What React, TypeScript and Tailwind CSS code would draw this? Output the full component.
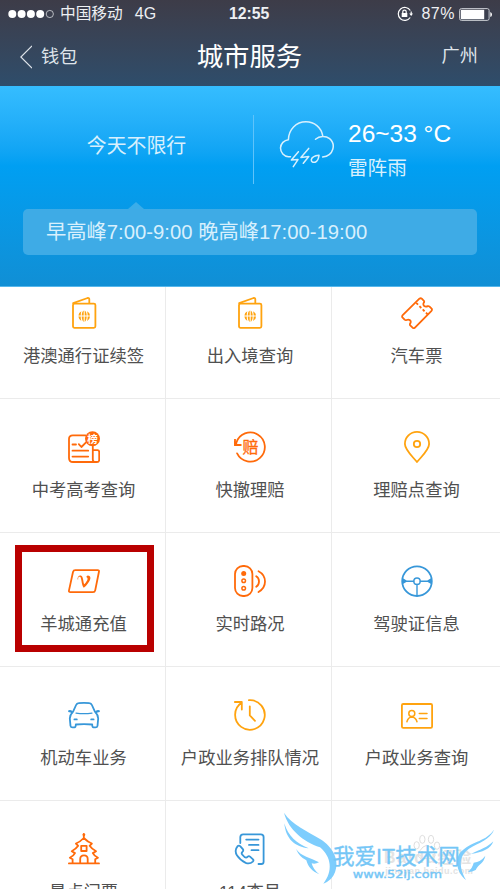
import type { ReactNode } from "react";

type Service = {
  label: string;
  color: string;
  icon: ReactNode;
  highlighted?: boolean;
};

const ORANGE = "text-[#ff6a0a]";
const YELLOW = "text-[#ffa30f]";
const BLUE = "text-[#3797d9]";

const passport = (
  <>
    <rect x="5" y="6.6" width="22.4" height="24.2" rx="1.5" />
    <path d="M5.2 6.2 19.6 1Q21.3.7 21.3 2.3V6.2" />
    <g fill="currentColor" stroke="none">
      <path d="M13.4 14.2Q10.5 15.6 10.4 18.6H12.7Q12.7 16 13.4 14.2ZM10.4 19.6H12.7Q12.7 22.3 13.4 24.1 10.5 22.6 10.4 19.6ZM19 14.2Q21.9 15.6 22 18.6H19.7Q19.7 16 19 14.2ZM22 19.6H19.7Q19.7 22.3 19 24.1 21.9 22.6 22 19.6Z" />
      <path d="M15.7 13.4Q13.9 14.5 13.7 18.6H15.7ZM16.7 13.4Q18.5 14.5 18.7 18.6H16.7ZM15.7 24.9Q13.9 23.8 13.7 19.6H15.7ZM16.7 24.9Q18.5 23.8 18.7 19.6H16.7Z" />
    </g>
  </>
);

const ticket = (
  <>
    <path d="M18.4 1.7Q19.7.8 20.8 1.7L22.9 3.8Q23.6 4.8 22.6 6 21.9 7.8 23.2 9.1 24.8 10.1 26.8 9.1 27.8 8.9 28.6 9.6L30.6 11.6Q31.4 12.7 30.5 13.8L14.2 30.4Q12.9 31.7 11.6 30.7L9.2 28.4Q8.5 27.5 9.3 26.4 10.3 24.5 9 23.2 7.5 22 5.6 23 4.5 23.5 3.6 22.7L1.4 20.4Q.7 19.3 1.7 18.2Z" />
    <path d="m15.2 5.9 12 12" strokeDasharray="2.6 2" strokeLinecap="butt" />
  </>
);

const exam = (
  <>
    <path d="M24.8 14V28.5Q24.9 31 27 31H5Q1 31 1 27V8Q1 4.3 4.8 4.3H17.5M24.8 19.2H29.5Q31.2 19.3 31.2 21V29Q31 31 29 31H26" />
    <path d="M4.5 13.5H8M10.8 13.2 13.4 16 17.8 11.6M4.5 19.7H20.2M4.5 25.6H20.2" />
    <circle cx="24.5" cy="7.7" r="7.5" fill="currentColor" stroke="none" />
    <text x="24.5" y="11.6" textAnchor="middle" fill="white" stroke="none" fontSize="10.5" fontWeight="700">
      榜
    </text>
  </>
);

const claim = (
  <>
    <path d="M2.2 12A14.6 14.6 0 1 1 3.1 22.4" />
    <path d="M1 8V14H7.5" strokeLinecap="butt" strokeLinejoin="miter" />
    <path d="M.2 9.5 4.8 14.2.2 14.8Z" fill="currentColor" stroke="none" />
    <text x="16.6" y="21.7" textAnchor="middle" fill="currentColor" stroke="currentColor" strokeWidth=".3" fontSize="16">
      赔
    </text>
  </>
);

const pin = (
  <>
    <path d="M16 31C11 25 3.9 18.8 3.9 13A12.1 12.1 0 0 1 28.1 13C28.1 18.8 21 25 16 31Z" />
    <circle cx="16" cy="13" r="3.2" />
  </>
);

const card = (
  <>
    <path d="M7.3 5.2H29.6Q31.4 5.2 30.9 7L27.2 25.4Q26.8 27.2 25 27.2H2.4Q.6 27.2 1 25.4L5 7Q5.5 5.2 7.3 5.2Z" />
    <path
      d="M9.6 14.6C8.8 10.7 13.3 8.7 14.6 12.4 15.5 15 15.4 17.6 16.2 19.3 18.5 16.8 21 13.6 18.6 12.2 18.1 11.7 18.8 10.6 20 10.4 24.9 11 21.8 17.6 15.8 22.8 13.6 20.5 13.7 14.4 12.4 12 10.6 11 9.9 12.7 10.2 14.4Z"
      fill="currentColor"
      stroke="none"
    />
  </>
);

const traffic = (
  <>
    <rect x="1" y="1" width="17.4" height="30" rx="8" />
    <circle cx="9.7" cy="8.4" r="2.5" fill="currentColor" stroke="none" />
    <circle cx="9.7" cy="15.8" r="1.8" strokeWidth="1.5" />
    <circle cx="9.7" cy="23.2" r="1.8" strokeWidth="1.5" />
    <path d="M22.2 11.3Q25 13 25 16.5T22.2 21.8M24.5 6.2Q31 9.7 31 16.5T24.5 27" />
  </>
);

const wheel = (
  <>
    <circle cx="16" cy="16.2" r="14.8" />
    <circle cx="16" cy="16.2" r="3.2" strokeWidth="1.4" />
    <path d="M3 16.2H12.8M19.2 16.2H29M16 19.4V30.5" strokeWidth="1.4" />
    <path d="M1.5 13 5.3 15.3V17L1.5 19.3ZM30.5 13 26.7 15.3V17L30.5 19.3Z" fill="currentColor" stroke="none" />
  </>
);

const car = (
  <>
    <path d="M5.2 12.4 8.1 6Q8.8 4.4 10.6 4.2 16 3.4 21.4 4.2 23.2 4.4 23.9 6L26.8 12.4Q30.2 16 30.2 19.5L29.5 26.8Q29.2 28.5 27.2 28.4H25.5Q24.2 28.3 24.2 25.5 16 24.6 7.8 25.5 7.8 28.3 6.5 28.4H4.8Q2.8 28.5 2.5 26.8L1.8 19.5Q1.8 16 5.2 12.4Z" />
    <path d="M1.2 12.2Q2.5 11.8 4 13.2M30.8 12.2Q29.5 11.8 28 13.2" strokeWidth="2.2" />
    <path d="M8 14.1Q16 15.3 24 14.1" strokeWidth="1.2" />
    <path d="M6.4 20.4H8.8M23.2 20.4H25.6" />
  </>
);

const queue = (
  <>
    <path d="M14.9 1.2A14.8 14.8 0 1 1 7.8 3.6M.8 3H7.8V10.5M15.8 7.3V16.4L21 21.8" />
  </>
);

const idCard = (
  <>
    <rect x=".9" y="5" width="30.2" height="23.8" rx="1.3" />
    <circle cx="10.8" cy="14.4" r="3" strokeWidth="1.5" />
    <path d="M5.9 22.8Q7.2 18.3 10.8 18.1 14.7 18.3 16 22.8M18.3 14.4H26M18.3 19.6H26" strokeWidth="1.5" />
  </>
);

const pagoda = (
  <>
    <path d="M15.8 1V5Q12 9 7.9 10.5L10.2 12.8Q8 16 3.7 18.2L7 20.1Q5.5 23 1.8 24.7L4.6 26.2V30.2M15.8 5Q19.8 9 23.9 10.5L21.6 12.8Q23.8 16 28.1 18.2L24.8 20.1Q26.3 23 30 24.7L27.2 26.2V30.2M.9 30.4H31" />
    <path d="M13.2 12.8H18.6V18H13.2ZM12.2 30V26Q12.3 22.3 16 22.3T19.7 26V30" />
    <circle cx="15.9" cy="1.8" r="1.4" fill="currentColor" stroke="none" />
  </>
);

const directory = (
  <>
    <path d="M6.3 10V4.2Q6.3 1.3 9.2 1.3H26.8Q29.6 1.3 29.6 4V29Q29.5 31 27.4 31H24.5M12.2 6.6H24.5M15 11.9H24.5M17.5 17.2H24.5" />
    <path d="M3.5 13.3Q5 12 6.4 13.3L9 16.3Q9.7 17.6 8.4 18.8 7 20.2 8.3 21.7L10.5 24Q12.2 25.3 13.5 23.8 14.8 22.6 16 23.6L19 26.3Q20 27.4 18.8 28.6 15.8 31.4 11.7 29.8 6.3 27.5 3.1 22.6 0 17.3 3.5 13.3Z" />
  </>
);

const services: Service[] = [
  { label: "港澳通行证续签", color: YELLOW, icon: passport },
  { label: "出入境查询", color: YELLOW, icon: passport },
  { label: "汽车票", color: ORANGE, icon: ticket },
  { label: "中考高考查询", color: ORANGE, icon: exam },
  { label: "快撤理赔", color: ORANGE, icon: claim },
  { label: "理赔点查询", color: YELLOW, icon: pin },
  { label: "羊城通充值", color: ORANGE, icon: card, highlighted: true },
  { label: "实时路况", color: ORANGE, icon: traffic },
  { label: "驾驶证信息", color: BLUE, icon: wheel },
  { label: "机动车业务", color: BLUE, icon: car },
  { label: "户政业务排队情况", color: YELLOW, icon: queue },
  { label: "户政业务查询", color: YELLOW, icon: idCard },
  { label: "景点门票", color: ORANGE, icon: pagoda },
  { label: "114查号", color: BLUE, icon: directory },
];

function StatusBar() {
  return (
    <div className="flex h-7 items-center pl-2 pr-[7px] text-[#eef0f3]">
      <div className="flex w-[221px] items-center">
        <svg className="h-[10px] w-[47px]" viewBox="0 0 47 10" fill="white">
          <circle cx="4.3" cy="5" r="4" />
          <circle cx="13.6" cy="5" r="4" />
          <circle cx="22.9" cy="5" r="4" />
          <circle cx="32.2" cy="5" r="4" />
          <circle cx="41.8" cy="5" r="3.6" fill="none" stroke="#d5d8dd" strokeWidth=".8" />
        </svg>
        <span className="ml-[5px] text-[15.7px] leading-7">中国移动</span>
        <span className="ml-[12px] text-base leading-7">4G</span>
      </div>
      <span className="text-[15.8px] font-bold leading-7">12:55</span>
      <div className="ml-auto flex items-center">
        <svg className="h-4 w-4" viewBox="0 0 16 16" fill="none" stroke="white" strokeWidth="1.2">
          <path d="M13.3 4.5A6.5 6.5 0 1 0 13.2 11.5M14.2 5.5V8.5" />
          <path d="m12.2 7.5 2 2.5 1.8-2.5Z" fill="white" stroke="none" />
          <path d="M5.8 7.5V5.8Q5.8 4.2 7.5 4.2T9.2 5.8V7.5" />
          <rect x="4.7" y="7" width="5.6" height="4" fill="white" stroke="none" />
        </svg>
        <span className="ml-2 text-base leading-7 tracking-[0.5px]">87%</span>
        <svg className="ml-1 h-[13px] w-[34px]" viewBox="0 0 34 13">
          <rect x=".6" y=".6" width="29.5" height="11.8" rx="1.8" fill="none" stroke="#c9ccd2" />
          <rect x="1.8" y="1.8" width="23.4" height="9.4" fill="white" />
          <path d="M31.3 4Q33 4.5 33 6.5T31.3 9Z" fill="white" />
        </svg>
      </div>
    </div>
  );
}

function NavBar() {
  return (
    <div className="grid h-[58px] grid-cols-3 items-center pl-5 pr-[22px] text-[#dfe4ea]">
      <div className="flex items-center text-[18.2px]">
        <svg className="mr-[9px] h-6 w-3" viewBox="0 0 12 24" fill="none" stroke="currentColor" strokeWidth="1.2">
          <path d="M12 .8.8 12 12 23.2" />
        </svg>
        <span className="pt-px">钱包</span>
      </div>
      <h1 className="pl-px text-center text-[26.4px] leading-10 text-white">城市服务</h1>
      <span className="text-right text-[18.2px]">广州</span>
    </div>
  );
}

function Weather() {
  return (
    <section className="h-[201px] border-b border-[#55b7ec] bg-linear-to-b from-[#35bdff] via-[#009ff2] via-40% to-[#108fd5] px-[23px] pt-[29px] text-[#d8f0fd]">
      <div className="flex h-[69px]">
        <div className="flex w-[231px] items-center justify-center border-r border-[#5fc3fa] pb-[5px] pr-[3px] text-[19.9px]">
          今天不限行
        </div>
        <svg
          className="ml-[25px] mt-[6px] h-12 w-[56px]"
          viewBox="-1 0 56 48"
          fill="none"
          stroke="currentColor"
          strokeWidth="1.5"
          strokeLinecap="round"
          strokeLinejoin="round"
        >
          <path d="M10.5 35.7H8.5A8.8 8.8 0 0 1 .5 27 8.7 8.7 0 0 1 8.4 18.7C8.6 8.5 16 .8 26 .8 34.3.8 41.2 6.5 42.7 14.7M35.5 18.2C39.5 14.6 45.8 14.5 49.6 17.6 55.8 22.8 54.2 34.8 42.6 36" />
          <path d="m18.4 30.7-7 8.4 6.6-.5-4.7 7M28.7 27.4l-7.8 9 7.9-.8-5.5 6.7M39 34.3Q32 35 31.3 38.7 31.3 42 35.1 41.2 38.3 40 39 34.3Z" />
        </svg>
        <div className="ml-[13px] pt-[5px]">
          <p className="whitespace-nowrap text-[24.5px] leading-7 text-white">26~33 °C</p>
          <p className="mt-[6px] text-[19.6px] leading-7">雷阵雨</p>
        </div>
      </div>
      <div className="relative mt-[25px] flex h-[46px] items-center rounded-[5px] bg-[#3eabe6] pl-[23px] pt-px text-[20.3px]">
        <svg className="absolute -top-[7px] left-[105px] h-[7px] w-4" viewBox="0 0 16 7" fill="#3aade9">
          <path d="M0 7 8 0 16 7Z" />
        </svg>
        <span className="whitespace-nowrap">早高峰7:00-9:00 晚高峰17:00-19:00</span>
      </div>
    </section>
  );
}

function ServiceCell({ label, color, icon, highlighted }: Service) {
  return (
    <div className="relative flex flex-col items-center border-b border-r border-[#ebebeb] pt-8 nth-[3n+1]:pl-[2px] nth-[3n+2]:pl-[3px]">
      <svg
        className={`h-8 w-8 ${color}`}
        viewBox="0 0 32 32"
        fill="none"
        stroke="currentColor"
        strokeWidth="1.8"
        strokeLinecap="round"
        strokeLinejoin="round"
      >
        {icon}
      </svg>
      <span className="mt-[13px] whitespace-nowrap text-[17.3px] leading-7 text-[#505050]">{label}</span>
      {highlighted && <div className="absolute left-[14.5px] top-[12px] h-[107px] w-[139px] border-[7px] border-[#b90000]" />}
    </div>
  );
}

function Watermark() {
  return (
    <svg className="absolute bottom-0 right-0 h-[79px] w-[220px]" viewBox="90 420 660 237">
      <g fill="none" stroke="#dedede" strokeWidth="3">
        <ellipse cx="517" cy="508" rx="8" ry="12" />
        <ellipse cx="543" cy="508" rx="8" ry="12" />
        <ellipse cx="500" cy="526" rx="8" ry="11" />
        <ellipse cx="561" cy="527" rx="8" ry="11" />
        <path d="M530 526Q542 528 550 542 562 560 546 566H514Q498 560 510 542 518 528 530 526Z" />
      </g>
      <g fill="#e3e3e3" className="font-bold">
        <text x="402" y="578" fontSize="48" textLength="262">Baidu经验</text>
        <text x="406" y="613" fontSize="27" textLength="262">jingyan.baidu.com</text>
      </g>
      <g fill="#7dcdfd">
        <path d="M102 428C124 464 174 484 210 507C250 532 269 570 255 607Q246 632 220 641C250 604 244 560 210 532C160 514 116 480 102 428Z" />
        <path d="M103 460C115 500 139 519 176 535C136 531 107 508 103 460Z" />
        <path d="M138 537C154 560 181 563 207 577Q196 583 185 580 190 600 208 613C186 604 174 590 169 571Q148 561 138 537Z" />
        <path d="M733 478C720 510 687 518 657 536C631 554 622 583 648 630C618 607 612 561 638 541C668 514 710 514 733 478Z" />
        <path d="M730 514C722 538 698 546 663 552 692 538 713 532 730 514Z" />
        <path d="M706 557C702 580 684 583 677 600Q664 607 654 606 668 593 671 578 692 576 706 557Z" />
      </g>
      <g fill="#74c6f6" stroke="#74c6f6">
        <text x="249" y="582" fontSize="64" strokeWidth="1" textLength="380" lengthAdjust="spacingAndGlyphs">
          我爱IT技术网
        </text>
        <text
          x="308"
          y="623"
          fontSize="33"
          strokeWidth="1.2"
          textLength="268"
          lengthAdjust="spacingAndGlyphs"
          className="font-['DejaVu_Sans']"
        >
          www.52ij.com
        </text>
      </g>
    </svg>
  );
}

export default function App() {
  return (
    <div className="relative flex h-[889px] w-[500px] flex-col overflow-hidden bg-white font-['Liberation_Sans','Noto_Sans_CJK_SC',sans-serif]">
      <header className="h-[86px] shrink-0 bg-linear-to-b from-[#3d3c48] to-[#2e4d6b]">
        <StatusBar />
        <NavBar />
      </header>
      <div className="shrink-0">
        <Weather />
      </div>
      <main className="min-h-0 flex-1 overflow-hidden">
        <div className="-mt-[22px] grid auto-rows-[134px] grid-cols-[166px_166px_170px]">
          {services.map((service) => (
            <ServiceCell key={service.label} {...service} />
          ))}
        </div>
      </main>
      <Watermark />
    </div>
  );
}
